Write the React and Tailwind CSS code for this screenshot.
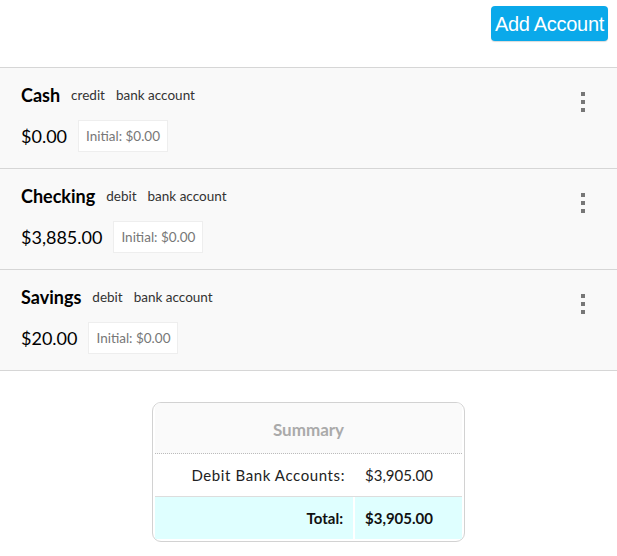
const accounts = [
  { name: 'Cash', type: 'credit', balance: '$0.00', initial: '$0.00' },
  { name: 'Checking', type: 'debit', balance: '$3,885.00', initial: '$0.00' },
  { name: 'Savings', type: 'debit', balance: '$20.00', initial: '$0.00' },
];

function MoreIcon() {
  return (
    <div className="flex flex-col items-center gap-[4px] pt-[2px]">
      <span className="block h-[4px] w-[4px] bg-[#777]" />
      <span className="block h-[4px] w-[4px] bg-[#777]" />
      <span className="block h-[4px] w-[4px] bg-[#777]" />
    </div>
  );
}

function AccountCard({ account }) {
  return (
    <div className="flex h-[101px] justify-between border-b border-[#d6d6d6] bg-[#f9f9f9] pl-[21px] pr-[32px]">
      <div className="flex flex-col">
        <div className="flex h-[52px] items-center gap-[11px] pt-[3px]">
          <span className="text-[18px] font-bold text-black">{account.name}</span>
          <span className="text-[13.5px] text-[#333]">{account.type}</span>
          <span className="text-[13.5px] text-[#333]">bank account</span>
        </div>
        <div className="flex items-center gap-[11px]">
          <span className="text-[18px] text-black">{account.balance}</span>
          <span className="flex h-[32px] items-center border border-[#eee] bg-white px-[7px] text-[13.5px] text-[#777]">
            Initial: {account.initial}
          </span>
        </div>
      </div>
      <div className="pt-[22px]">
        <MoreIcon />
      </div>
    </div>
  );
}

export default function App() {
  return (
    <div className="min-h-[556px] bg-white font-['Lato',sans-serif]">
      <div className="flex h-[67px] justify-end pr-[9px] pt-[6px]">
        <button className="h-[35px] rounded-[4px] bg-[#0aa9ea] px-[4px] font-['Liberation_Sans',Arial,sans-serif] text-[20px] tracking-[-0.3px] text-white shadow-[0_1px_1px_rgba(0,0,0,0.15)]">
          Add Account
        </button>
      </div>

      <div className="border-t border-[#d6d6d6]">
        {accounts.map((a) => (
          <AccountCard key={a.name} account={a} />
        ))}
      </div>

      <div className="flex justify-center pt-[31px]">
        <div className="w-[313px] overflow-hidden rounded-[9px] border border-[#d2d2d2] bg-white p-[2px] pt-0">
          <div className="flex h-[51px] items-center justify-center border-b border-dotted border-[#bbb] bg-[#fafafa] pt-[3px] text-[17px] font-bold text-[#aaa]">
            Summary
          </div>
          <div className="flex h-[42px] items-center text-[15px] text-[#222]">
            <div className="w-[200px] pr-[10px] text-right tracking-[0.6px]">Debit Bank Accounts:</div>
            <div className="pl-[10px]">$3,905.00</div>
          </div>
          <div className="flex h-[43px] gap-[2px] border-t border-[#ddd] text-[15px] font-bold text-[#111]">
            <div className="flex w-[198px] items-center justify-end bg-[#dfffff] pr-[10px]">Total:</div>
            <div className="flex flex-1 items-center bg-[#dfffff] pl-[10px]">$3,905.00</div>
          </div>
        </div>
      </div>
    </div>
  );
}
